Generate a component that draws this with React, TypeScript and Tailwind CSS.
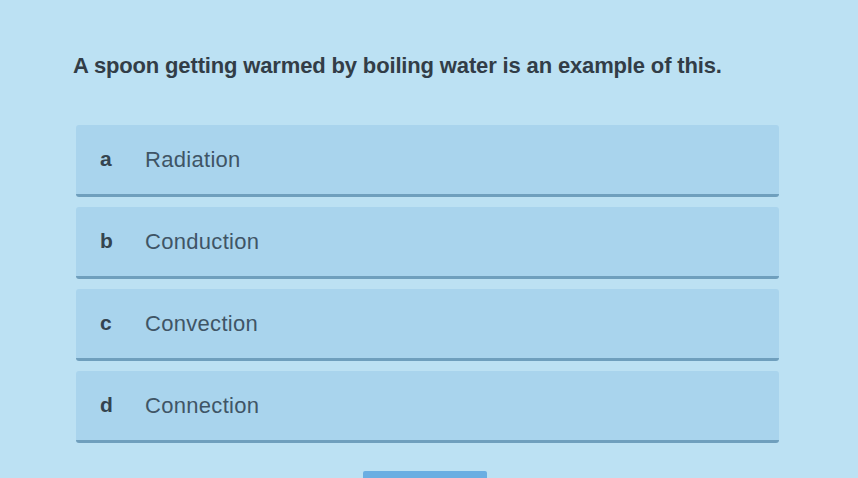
import React from 'react';

interface Choice {
  key: string;
  label: string;
}

const choices: Choice[] = [
  { key: 'a', label: 'Radiation' },
  { key: 'b', label: 'Conduction' },
  { key: 'c', label: 'Convection' },
  { key: 'd', label: 'Connection' },
];

const App: React.FC = () => {
  return (
    <div
      className="w-[858px] h-[478px] overflow-hidden bg-[#bce1f3] flex flex-col"
      style={{ fontFamily: '"Liberation Sans", Arial, sans-serif' }}
    >
      <div className="pt-[53px] pl-[73px] text-[22px] leading-[26px] font-bold text-[#323d47] tracking-[-0.15px]">
        A spoon getting warmed by boiling water is an example of this.
      </div>

      <div className="mt-[46px] ml-[76px] w-[703px] flex flex-col gap-[10px]">
        {choices.map(c => (
          <div
            key={c.key}
            className="h-[72px] flex items-center pb-[1px] rounded-[3px] bg-[#a9d4ed] border-b-[3px] border-[#6f9fbd]"
          >
            <span className="w-[69px] pl-[24px] text-[21px] font-bold text-[#34444f]">
              {c.key}
            </span>
            <span className="text-[22px] text-[#3f5566] tracking-[0.3px]">
              {c.label}
            </span>
          </div>
        ))}
      </div>

      <div className="mt-[28px] ml-[363px] w-[124px] h-[12px] bg-[#6aaee2] rounded-t-[2px]" />
    </div>
  );
};

export default App;
